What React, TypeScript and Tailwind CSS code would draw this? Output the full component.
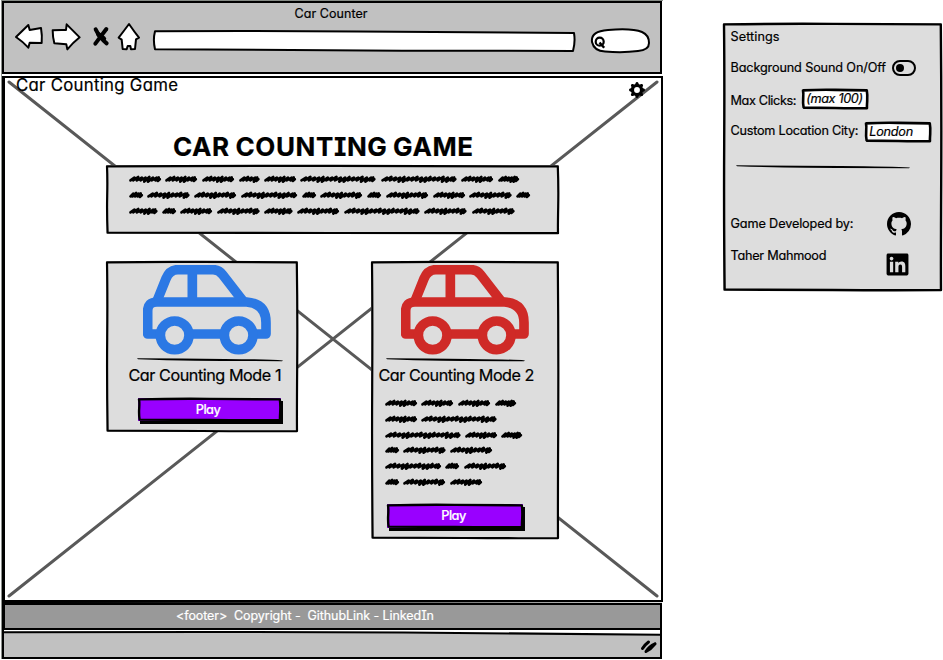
import { useLayoutEffect, useRef, useState } from "react";
import type { ReactNode } from "react";
import { BsGearFill, BsGithub } from "react-icons/bs";
import { FaLinkedin } from "react-icons/fa";

/** A single line of lettering whose tracking is adjusted to span `width` pixels. */
function Label({ text, width, className = "" }: { text: string; width: number; className?: string }) {
  const ref = useRef<HTMLSpanElement>(null);
  const [tracking, setTracking] = useState(0);
  useLayoutEffect(() => {
    if (ref.current) {
      const natural = ref.current.getBoundingClientRect().width - tracking * text.length;
      setTracking((width - natural) / (text.length - 1));
    }
  }, [text, width]);
  return (
    <span
      ref={ref}
      style={{ letterSpacing: `${tracking}px` }}
      className={`inline-block shrink-0 whitespace-pre leading-4 [-webkit-text-stroke:0.2px_currentColor] [font-family:Inter,'Open_Sans',sans-serif] [font-feature-settings:'cv11','cv08'] ${className}`}
    >
      {text}
    </span>
  );
}

/** Hand-drawn outline around a box of w x h. */
function Outline({ w, h, stroke = 2.2 }: { w: number; h: number; stroke?: number }) {
  const d = `M1 1.4 Q${w * 0.25} 0.6 ${w * 0.5} 0.9 T${w - 1.2} 1.4 Q${w - 0.4} ${h * 0.3} ${w - 0.8} ${h * 0.6} T${w - 1} ${h - 0.9} Q${w * 0.75} ${h - 0.6} ${w * 0.5} ${h - 1} T1.6 ${h - 1.4} Q0.8 ${h * 0.7} 1.2 ${h * 0.45} T1 1.4Z`;
  return (
    <svg className="pointer-events-none absolute inset-0 overflow-visible" width={w} height={h} fill="none">
      <path d={d} stroke="#000" strokeWidth={stroke} strokeLinejoin="round" />
    </svg>
  );
}

function Scribble({ w }: { w: number }) {
  const n = Math.max(3, Math.round(w / 4.6));
  const step = (w - 6) / n;
  let d = "M1.5 5.4";
  for (let i = 0; i < n; i++) {
    const x = 1.5 + i * step;
    const low = i % 5 > 2 ? 6.6 : 5.4;
    d += ` L${x + step * 0.95 + 0.4} ${i % 3 === 1 ? 2 : 2.6} L${x + step * 0.7} ${low}`;
  }
  d += ` L${w - 2.3} 2.5 L${w - 3.2} 5.9 L${w - 1.2} 4.2`;
  return (
    <svg width={w} height={8} className="shrink-0 overflow-visible" fill="none">
      <path d={d} stroke="#000" strokeWidth="2.7" strokeLinecap="round" strokeLinejoin="round" />
    </svg>
  );
}

function ScribbleText({ rows }: { rows: number[][] }) {
  return (
    <div className="flex flex-col gap-[7.8px]">
      {rows.map((row, i) => (
        <div key={i} className="flex h-2 gap-[4.7px]">
          {row.map((w, j) => (
            <Scribble key={j} w={w} />
          ))}
        </div>
      ))}
    </div>
  );
}

function Car({ color }: { color: string }) {
  return (
    <svg width="128" height="90" viewBox="130 30 384 270" fill="none" stroke={color} strokeWidth="29" strokeLinejoin="round" className="shrink-0">
      <path d="M184 237H144V168Q144 141 172 141H441Q499 146 499 203V237H462M271 237H371" />
      <path d="M172 138L199 71Q210 44 235 44H340Q357 44 369 59L430 138M278 44V141" />
      <circle cx="225" cy="241" r="43" />
      <circle cx="417" cy="241" r="43" />
    </svg>
  );
}

function Rule({ w }: { w: number }) {
  return (
    <svg width={w} height="4" viewBox={`0 0 ${w} 4`} className="shrink-0 overflow-visible">
      <path d={`M0 0.3 Q${w * 0.3} 0.5 ${w * 0.6} 0.9 T${w} 2.4 L${w - 1} 3.2 Q${w * 0.6} 3 ${w * 0.4} 2.8 T1 1.2Z`} fill="#000" />
    </svg>
  );
}

function PlayButton({ w, h }: { w: number; h: number }) {
  return (
    <button
      style={{ width: w, height: h }}
      className="relative flex shrink-0 items-center justify-center bg-[#9900ff] shadow-[2px_3px_0_0_#000] outline-none"
    >
      <Outline w={w} h={h} stroke={2.4} />
      <Label text="Play" width={25} className="mr-0.5 mt-px text-[12.8px] font-medium text-white" />
    </button>
  );
}

function Field({ children, w, h }: { children: ReactNode; w: number; h: number }) {
  return (
    <div style={{ width: w, height: h }} className="relative flex shrink-0 items-center bg-white pl-1">
      <Outline w={w} h={h} stroke={2.6} />
      {children}
    </div>
  );
}

function Toolbar() {
  return (
    <header className="flex h-[73px] w-[660px] flex-col items-center border-2 border-black bg-[#c1c1c1] pt-[3px]">
      <Label text="Car Counter" width={73} className="mr-0.5 text-[12.5px]" />
      <nav className="-mt-px flex h-8 w-full items-center pl-[11px]">
        <svg width="29" height="28" viewBox="48 70 87 84" fill="#fff" stroke="#000" strokeWidth="6" strokeLinejoin="round" className="overflow-visible">
          <path d="M51 112L88 76L92 91L126 85Q130 108 128 130L92 129L88 144Q73 127 51 112Z" />
        </svg>
        <svg width="29" height="28" viewBox="156 70 87 84" fill="#fff" stroke="#000" strokeWidth="6" strokeLinejoin="round" className="ml-[7px] overflow-visible">
          <path d="M161 92Q180 90 201 91L203 74L242 113Q222 129 205 149L202 134L166 131Q161 112 161 92Z" />
        </svg>
        <svg width="18" height="28" viewBox="279 67 54 84" fill="none" stroke="#000" strokeWidth="12" strokeLinecap="round" className="ml-3 overflow-visible">
          <path d="M290 86Q302 111 323 128" />
          <path d="M322 85L289 129" />
          <path d="M299 102L314 114" strokeWidth="15" />
        </svg>
        <svg width="24" height="28" viewBox="354 69 72 84" fill="#fff" stroke="#000" strokeWidth="6" strokeLinejoin="round" className="ml-[7px] overflow-visible">
          <path d="M390 72Q405 94 420 113L411 118L408 147L396 148L394 138L386 138L383 148L371 147L368 119L359 113Q373 95 390 72Z" />
        </svg>
        <svg width="424" height="24" viewBox="0 0 424 24" fill="#fff" stroke="#000" strokeWidth="2" strokeLinejoin="round" className="ml-[11px] mt-2">
          <path d="M3 2.2L90 2L205 2.4L422 4Q423.5 13 421 21.9L250 21.7L3 20.2Q0.8 11 3 2.2Z" />
        </svg>
        <svg width="60" height="26" viewBox="0 0 60 26" fill="#fff" stroke="#000" strokeWidth="2" className="ml-3.5 mt-2">
          <path d="M2 14C1 6 7 3 18 2Q42 0 52 4Q59 7 59 15Q59 22 48 23Q33 25 15 23.5Q4 23 2 14Z" />
          <circle cx="9.7" cy="13.7" r="4" strokeWidth="2.2" />
          <path d="M9.5 14.5L14.2 19.8" strokeWidth="2.4" />
        </svg>
      </nav>
    </header>
  );
}

function ModeCard({ w, h, padding, children }: { w: number; h: number; padding: string; children: ReactNode }) {
  return (
    <section style={{ width: w, height: h }} className={`relative flex shrink-0 flex-col items-start bg-[#dddddd] pt-1 ${padding}`}>
      <Outline w={w} h={h} />
      {children}
    </section>
  );
}

function Page() {
  return (
    <main className="relative mt-0.5 flex h-[526px] w-[661px] flex-col border-2 border-l-[3px] border-t-[2.5px] border-black bg-white">
      <svg className="pointer-events-none absolute -left-[5px] -top-[78px] overflow-visible" width="660" height="600" stroke="#595959" strokeWidth="3" strokeLinecap="round">
        <path d="M9 82L657 596M657 82L9 596" />
      </svg>
      <div className="relative flex h-[26px] items-start justify-between pl-[11px] pr-[16px]">
        <Label text="Car Counting Game" width={162} className="-mt-[3px] pt-px text-[16.8px] leading-[18px]" />
        <BsGearFill size={16} className="mt-1" />
      </div>
      <div className="relative flex flex-col pl-[100.5px] pt-[32px]">
        <h1 className="flex h-[28.5px] items-start pl-[67.5px]">
          <Label text="CAR COUNTING GAME" width={300} className="pt-px text-[26px] font-bold leading-[20px] [word-spacing:-1px]" />
        </h1>
        <section className="relative h-[69px] w-[453px] bg-[#dddddd] pl-[23px] pt-[10.5px]">
          <Outline w={453} h={69} />
          <ScribbleText
            rows={[
              [32, 32, 32, 20.5, 32, 75.5, 75.5, 32, 21],
              [14, 42.5, 42, 56, 14, 42, 14, 42, 32, 42.5, 14],
              [28.5, 14, 32, 42.5, 28.5, 42, 75.5, 42.5, 42.5],
            ]}
          />
        </section>
        <div className="mt-[27px] flex items-start gap-[73px]">
          <ModeCard w={192} h={171} padding="pl-[23px]">
            <div className="pl-3.5">
              <Car color="#2b78e4" />
            </div>
            <div className="flex h-[12px] items-start pl-2 pt-[3px]">
              <Rule w={146} />
            </div>
            <Label text="Car Counting Mode 1" width={153} className="text-[16.2px]" />
            <div className="pl-[9px] pt-[15px]">
              <PlayButton w={143} h={23} />
            </div>
          </ModeCard>
          <ModeCard w={188} h={278} padding="pl-2">
            <div className="pl-[22px]">
              <Car color="#cf2a27" />
            </div>
            <div className="flex h-[12px] items-start pl-[7px] pt-[3px]">
              <Rule w={139} />
            </div>
            <Label text="Car Counting Mode 2" width={156} className="text-[16.2px]" />
            <div className="h-[121px] pl-1.5 pt-[16.5px]">
              <ScribbleText
                rows={[
                  [32, 32, 32, 21],
                  [32, 75.5],
                  [75.5, 32, 21],
                  [14, 42.5, 42],
                  [56, 14, 42],
                  [14, 42, 32],
                ]}
              />
            </div>
            <div className="pl-2">
              <PlayButton w={136} h={24} />
            </div>
          </ModeCard>
        </div>
      </div>
    </main>
  );
}

function BrowserWindow() {
  return (
    <div className="ml-px flex w-[662px] shrink-0 flex-col border-l border-[#8c918c] bg-white">
      <div className="h-px bg-[#858a85]" />
      <Toolbar />
      <Page />
      <div className="h-px w-[660px] bg-gradient-to-r from-black via-[#444] to-[#ddd]" />
      <footer className="flex h-[27px] w-[660px] items-center border-2 border-l-[3px] border-black bg-[#999999] pl-[171px]">
        <Label text="<footer>  Copyright -  GithubLink - LinkedIn" width={258} className="-mt-0.5 text-[12.5px] text-white" />
      </footer>
      <div className="relative flex h-[29px] w-[660px] justify-end border-2 border-t-0 border-black bg-[#c1c1c1] pr-0.5 pt-[9px]">
        <svg width="656" height="6" viewBox="0 0 656 6" className="absolute left-0 top-0">
          <path d="M0 0H656V5L440 3L0 2Z" fill="#fff" />
          <path d="M0 2.2L200 2L400 2.4L656 4.8" stroke="#000" strokeWidth="2" fill="none" />
        </svg>
        <svg width="18" height="15" viewBox="0 0 18 15" fill="none" stroke="#000" strokeWidth="3" strokeLinecap="round">
          <path d="M2.5 9.5Q4.5 6 8.5 3M6 12.5Q9 7.5 15 4.8M6 12.5Q11 10 15 4.8" />
        </svg>
      </div>
    </div>
  );
}

function SettingsPanel() {
  return (
    <aside className="relative ml-[60px] mt-[23px] flex h-[268px] w-[219px] shrink-0 flex-col items-start bg-[#dddddd] pl-[7.5px] pt-1.5 text-[12.7px]">
      <Outline w={219} h={268} stroke={2.4} />
      <Label text="Settings" width={49} />
      <div className="mt-[15px] flex h-4 items-center gap-[6px]">
        <Label text="Background Sound On/Off" width={155.5} />
        <span className="flex h-4 w-6 items-center rounded-full border-2 border-black pl-[2px]">
          <span className="size-2 rounded-full bg-black" />
        </span>
      </div>
      <div className="mt-[12.5px] flex h-5 items-center gap-[6px]">
        <Label text="Max Clicks:" width={66} className="mt-1" />
        <Field w={66} h={20}>
          <Label text="(max 100)" width={57} className="italic" />
        </Field>
      </div>
      <div className="mt-[13.5px] flex h-5 items-center gap-[7px]">
        <Label text="Custom Location City:" width={128} className="-mt-0.5" />
        <Field w={66} h={20}>
          <Label text="London" width={44} className="italic" />
        </Field>
      </div>
      <div className="flex h-[68.5px] items-start pl-[5px] pt-[22.5px]">
        <Rule w={174} />
      </div>
      <div className="flex h-[26px] w-[180px] items-center justify-between">
        <Label text="Game Developed by:" width={123} />
        <BsGithub size={24} />
      </div>
      <div className="mt-[13.5px] flex h-7 w-[179.5px] items-center justify-between">
        <Label text="Taher Mahmood" width={96} className="-mt-4" />
        <FaLinkedin size={25} />
      </div>
    </aside>
  );
}

export default function App() {
  return (
    <div className="flex h-[660px] w-[943px] items-start overflow-hidden bg-white text-black">
      <BrowserWindow />
      <SettingsPanel />
    </div>
  );
}
